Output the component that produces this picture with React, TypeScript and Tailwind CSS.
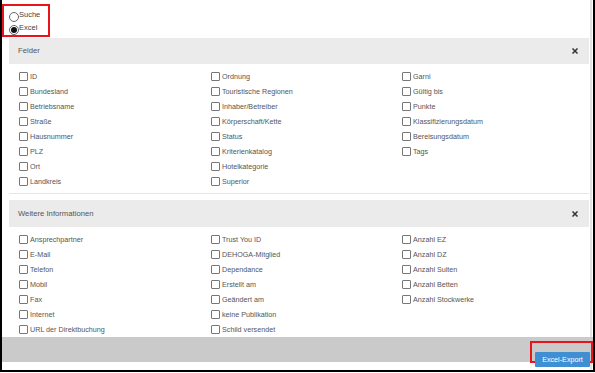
import React from 'react';

const felder: string[][] = [
  ['ID', 'Bundesland', 'Betriebsname', 'Straße', 'Hausnummer', 'PLZ', 'Ort', 'Landkreis'],
  ['Ordnung', 'Touristische Regionen', 'Inhaber/Betreiber', 'Körperschaft/Kette', 'Status', 'Kriterienkatalog', 'Hotelkategorie', 'Superior'],
  ['Garni', 'Gültig bis', 'Punkte', 'Klassifizierungsdatum', 'Bereisungsdatum', 'Tags'],
];

const weitere: string[][] = [
  ['Ansprechpartner', 'E-Mail', 'Telefon', 'Mobil', 'Fax', 'Internet', 'URL der Direktbuchung'],
  ['Trust You ID', 'DEHOGA-Mitglied', 'Dependance', 'Erstellt am', 'Geändert am', 'keine Publikation', 'Schild versendet'],
  ['Anzahl EZ', 'Anzahl DZ', 'Anzahl Suiten', 'Anzahl Betten', 'Anzahl Stockwerke'],
];

const Radio = ({ label, checked }: { label: string; checked?: boolean }) => (
  <div className="flex items-start h-[13px]">
    <span className="w-[10px] h-[10px] mt-[1px] rounded-full border border-[#666] bg-white flex items-center justify-center shrink-0">
      {checked && <span className="w-[6px] h-[6px] rounded-full bg-[#111]" />}
    </span>
    <span className="text-[7.5px] text-[#444] leading-none">{label}</span>
  </div>
);

const CloseIcon = () => (
  <svg width="6" height="6" viewBox="0 0 6 6" className="shrink-0">
    <path d="M1 1 L5 5 M5 1 L1 5" stroke="#333" strokeWidth="1.5" strokeLinecap="square" />
  </svg>
);

const Check = ({ label }: { label: string }) => (
  <div className="flex items-center h-[15px]">
    <span className="w-[9px] h-[9px] border border-[#777] rounded-[1px] bg-white shrink-0" />
    <span className="ml-[2px] text-[7.2px] text-[#555] leading-none whitespace-nowrap">{label}</span>
  </div>
);

const Panel = ({ title, cols, headClass, bodyClass }: { title: string; cols: string[][]; headClass: string; bodyClass: string }) => (
  <div className="w-[580px]">
    <div className={`bg-[#ebebeb] flex items-center justify-between pl-[9px] pr-[11px] ${headClass}`}>
      <span className="text-[7.7px] text-[#555]">{title}</span>
      <CloseIcon />
    </div>
    <div className={`bg-white grid grid-cols-[192px_191px_1fr] pl-[10px] pt-[5px] ${bodyClass}`}>
      {cols.map((col, i) => (
        <div key={i} className="flex flex-col">
          {col.map((l) => (
            <Check key={l} label={l} />
          ))}
        </div>
      ))}
    </div>
  </div>
);

export default function App() {
  return (
    <div
      className="w-[595px] h-[372px] bg-white border-l-2 border-r-2 border-b-2 border-black flex flex-col overflow-hidden"
      style={{ fontFamily: '"Liberation Sans", Arial, sans-serif' }}
    >
      <div className="flex flex-col border-r-2 border-[#e4e4e4] mr-[1px]">
        <div className="mt-[4px] mb-[1px] w-[48px] h-[33px] border-2 border-[#e8141c] pt-[5px] pl-[5px] shrink-0">
          <Radio label="Suche" />
          <Radio label="Excel" checked />
        </div>
        <div className="pl-[7px] flex flex-col">
          <Panel title="Felder" cols={felder} headClass="h-[26px]" bodyClass="h-[130px] border-b border-[#e6e6e6]" />
          <div className="h-[6px]" />
          <Panel title="Weitere Informationen" cols={weitere} headClass="h-[27px]" bodyClass="h-[110px]" />
        </div>
      </div>
      <div className="h-[25px] bg-[#cacaca] flex justify-end items-start shrink-0 relative z-10">
        <div className="mt-[4px] w-[63px] h-[22px] border-2 border-[#e8141c] pl-[3px] pt-[2px]">
          <button className="w-[55px] h-[15px] bg-[#3f8fd2] text-white text-[7.2px] leading-none rounded-[1px]">
            Excel-Export
          </button>
        </div>
      </div>
      <div className="flex-1 border-r-2 border-[#e4e4e4] mr-[1px]" />
    </div>
  );
}
